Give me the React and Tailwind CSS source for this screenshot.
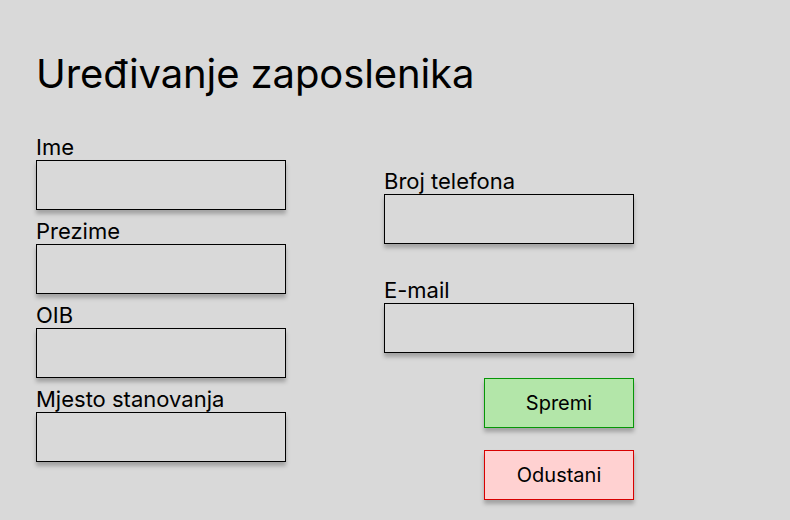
import React from "react";

function Field({ label }) {
  return (
    <div className="flex flex-col">
      <label className="pb-[2px] text-[22px] leading-[22px] text-black">{label}</label>
      <div className="h-[50px] w-[250px] border border-black bg-[#d9d9d9] shadow-[0_4px_4px_rgba(0,0,0,0.25)]" />
    </div>
  );
}

export default function App() {
  return (
    <div
      className="h-[520px] w-[790px] overflow-hidden bg-[#d9d9d9] pl-[36px] pt-[50px]"
      style={{ fontFamily: "Inter, 'Noto Sans', sans-serif" }}
    >
      <h1 className="text-[40px] leading-[48px] font-normal tracking-[-0.1px] text-black">Uređivanje zaposlenika</h1>
      <div className="mt-[38px] flex gap-[98px]">
        <div className="flex flex-col gap-[10px]">
          <Field label="Ime" />
          <Field label="Prezime" />
          <Field label="OIB" />
          <Field label="Mjesto stanovanja" />
        </div>
        <div className="mt-[34px] flex flex-col">
          <Field label="Broj telefona" />
          <div className="mt-[35px]">
            <Field label="E-mail" />
          </div>
          <div className="mt-[25px] flex flex-col items-end gap-[22px]">
            <button className="flex h-[50px] w-[150px] items-center justify-center border border-[#079607] bg-[#b3e6a9] text-[20px] text-black shadow-[0_4px_4px_rgba(0,0,0,0.25)]">
              Spremi
            </button>
            <button className="flex h-[50px] w-[150px] items-center justify-center border border-[#d80000] bg-[#ffd1d1] text-[20px] text-black shadow-[0_4px_4px_rgba(0,0,0,0.25)]">
              Odustani
            </button>
          </div>
        </div>
      </div>
    </div>
  );
}
